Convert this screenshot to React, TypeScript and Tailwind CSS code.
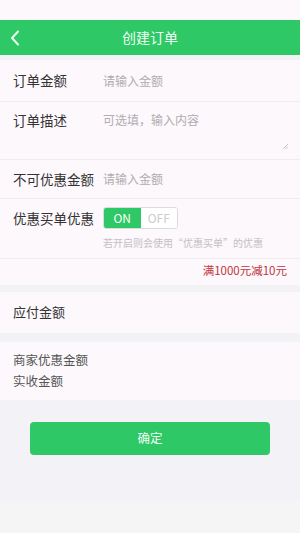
import { useState } from "react";

function BackIcon() {
  return (
    <svg width="10" height="16" viewBox="0 0 10 16" fill="none">
      <path d="M8 1.5L2 8l6 6.5" stroke="#eafff0" strokeWidth="2" strokeLinecap="round" strokeLinejoin="round" />
    </svg>
  );
}

function Row({ label, children, className = "" }: { label: string; children?: React.ReactNode; className?: string }) {
  return (
    <div className={`flex items-center border-b border-[#f0ecf0] px-[13px] ${className}`}>
      <span className="w-[90px] shrink-0 text-[13.5px] text-[#333]">{label}</span>
      {children}
    </div>
  );
}

export default function App() {
  const [on, setOn] = useState(true);

  return (
    <div
      className="flex h-[533px] w-[300px] flex-col bg-[#f5f5f5]"
      style={{ fontFamily: '"Noto Sans CJK SC", "Noto Sans", sans-serif' }}
    >
      <div className="h-[20px] bg-[#fcf8fc]" />
      <div className="relative flex h-[35px] items-center justify-center bg-[#2ec866]">
        <button className="absolute left-[10px] top-[10px]">
          <BackIcon />
        </button>
        <span className="text-[14px] text-[#effff3]">创建订单</span>
      </div>
      <div className="h-[5px] bg-[#f3f2f6]" />

      <div className="bg-[#fcf8fc]">
        <Row label="订单金额" className="h-[42px]">
          <input
            className="w-full bg-transparent text-[12px] text-[#333] outline-none placeholder:text-[#b0adb0]"
            placeholder="请输入金额"
          />
        </Row>
        <div className="relative flex h-[58px] items-start border-b border-[#f0ecf0] px-[13px] pt-[8px]">
          <span className="w-[90px] shrink-0 text-[13.5px] text-[#333]">订单描述</span>
          <textarea
            className="h-[44px] w-full resize-none bg-transparent pt-[1px] text-[12px] text-[#333] outline-none placeholder:text-[#b0adb0]"
            placeholder="可选填，输入内容"
          />
          <svg className="absolute bottom-[10px] right-[12px]" width="5" height="5" viewBox="0 0 5 5">
            <path d="M5 0L0 5M5 2.5L2.5 5" stroke="#b8b4b8" strokeWidth="0.8" />
          </svg>
        </div>
        <Row label="不可优惠金额" className="h-[39px]">
          <input
            className="w-full bg-transparent text-[12px] text-[#333] outline-none placeholder:text-[#b0adb0]"
            placeholder="请输入金额"
          />
        </Row>
        <div className="border-b border-[#f0ecf0] px-[13px] pb-[8px] pt-[8px]">
          <div className="flex items-center">
            <span className="w-[90px] shrink-0 text-[13.5px] text-[#333]">优惠买单优惠</span>
            <div className="flex h-[22px] w-[75px] overflow-hidden rounded-[3px] border border-[#dcdcdc] text-[12px]">
              <button
                onClick={() => setOn(true)}
                className={`flex-1 ${on ? "bg-[#2ec866] text-white" : "bg-white text-[#ccc]"}`}
              >
                ON
              </button>
              <button
                onClick={() => setOn(false)}
                className={`flex-1 ${!on ? "bg-[#2ec866] text-white" : "bg-white text-[#ccc]"}`}
              >
                OFF
              </button>
            </div>
          </div>
          <div className="mt-[6px] pl-[90px] text-[10px] text-[#c4c0c4]">若开启则会使用“优惠买单”的优惠</div>
        </div>
        <div className="flex h-[26px] items-center justify-end px-[13px] pb-[2px] text-[11.5px] text-[#c0333a]">满1000元减10元</div>
      </div>

      <div className="h-[7px] bg-[#f3f2f6]" />
      <div className="flex h-[41px] items-center bg-[#fcf8fc] px-[13px] pb-[2px] text-[13px] text-[#333]">应付金额</div>
      <div className="h-[9px] bg-[#f3f2f6]" />
      <div className="flex h-[58px] flex-col justify-center gap-[2px] bg-[#fcf8fc] px-[13px] text-[12.5px] text-[#555]">
        <span>商家优惠金额</span>
        <span>实收金额</span>
      </div>

      <div className="flex h-[101px] flex-col items-center bg-[#f3f2f6] pt-[22px]">
        <button className="h-[33px] w-[240px] rounded-[4px] bg-[#2ec866] text-[12.5px] text-[#effff3]">确定</button>
      </div>
      <div className="flex-1 bg-[#f5f5f5]" />
    </div>
  );
}
